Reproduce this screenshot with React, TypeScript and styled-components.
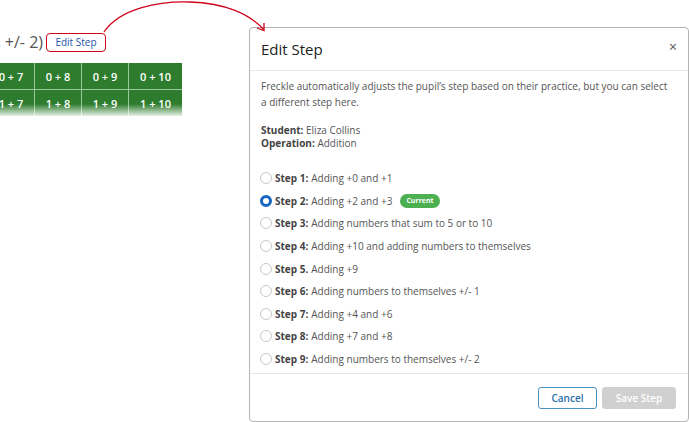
import styled, { createGlobalStyle } from "styled-components";

const GlobalStyle = createGlobalStyle`
  html, body {
    margin: 0;
    padding: 0;
    background: #ffffff;
    font-family: "Open Sans", "Noto Sans", Arial, sans-serif;
  }
`;

const Page = styled.div`
  position: relative;
  width: 689px;
  height: 422px;
  display: flex;
  overflow: hidden;
  background: #fff;
`;

const LeftSide = styled.div`
  width: 249px;
  flex-shrink: 0;
  padding-top: 32px;
  display: flex;
  flex-direction: column;
`;

const StepLine = styled.div`
  display: flex;
  align-items: center;
  height: 20px;
`;

const CroppedLabel = styled.div`
  width: 43px;
  overflow: hidden;
  display: flex;
  justify-content: flex-end;
  white-space: nowrap;
  font-size: 16px;
  color: #555;
  padding-right: 3px;
`;

const EditLink = styled.div`
  width: 58px;
  height: 17px;
  border: 1.5px solid #d0021b;
  border-radius: 4px;
  display: flex;
  align-items: center;
  justify-content: center;
  font-size: 10px;
  color: #2255aa;
`;

const TableCrop = styled.div`
  position: relative;
  margin-top: 11px;
  width: 182px;
  overflow: hidden;
  display: flex;
  justify-content: flex-end;

  &::after {
    content: "";
    position: absolute;
    left: 0;
    right: 0;
    bottom: 0;
    height: 16px;
    background: linear-gradient(to bottom, rgba(255, 255, 255, 0), #ffffff 85%);
  }
`;

const SumGrid = styled.div`
  display: grid;
  grid-template-columns: 46px 46px 46px 53px;
  grid-auto-rows: 26px;
  gap: 1px;
  background: #9cc79c;
  flex-shrink: 0;
  padding-bottom: 4px;
  background-clip: content-box;
`;

const SumCell = styled.div`
  background: #2e7d2e;
  color: #fff;
  font-size: 11px;
  font-weight: 600;
  display: flex;
  align-items: center;
  justify-content: center;
`;

const Modal = styled.div`
  margin-top: 27px;
  width: 438px;
  height: 393px;
  border: 1px solid #b3b3b3;
  border-radius: 4px;
  display: flex;
  flex-direction: column;
  background: #fff;
`;

const ModalHeader = styled.div`
  height: 42px;
  border-bottom: 1px solid #e6e6e6;
  display: flex;
  align-items: center;
  justify-content: space-between;
  padding: 0 11px 0 11px;
  flex-shrink: 0;
`;

const Title = styled.h2`
  margin: 0;
  font-size: 15px;
  font-weight: 400;
  color: #222;
`;

const Close = styled.span`
  font-size: 14px;
  color: #555;
  line-height: 1;
  margin-top: -4px;
`;

const ModalBody = styled.div`
  flex: 1;
  overflow-y: scroll;
  padding: 7px 11px 0 11px;
  font-size: 10px;
  color: #555;

  &::-webkit-scrollbar {
    width: 7px;
  }
  &::-webkit-scrollbar-track {
    background: #f1f1f1;
  }
  &::-webkit-scrollbar-thumb {
    background: #c1c1c1;
    border-radius: 2px;
  }
`;

const Intro = styled.p`
  margin: 0;
  line-height: 16px;
`;

const InfoBlock = styled.div`
  margin-top: 14px;
  line-height: 13px;
`;

const Bold = styled.b`
  font-weight: 700;
  color: #444;
`;

const StepList = styled.div`
  margin-top: 17px;
  display: flex;
  flex-direction: column;
  padding-bottom: 40px;
`;

const StepRow = styled.label`
  display: flex;
  align-items: center;
  height: 22.6px;
`;

const StepText = styled.span`
  margin-left: 3px;
`;

const Radio = styled.span<{ checked: boolean }>`
  width: 12px;
  height: 12px;
  box-sizing: border-box;
  border-radius: 50%;
  margin-left: -1px;
  margin-right: 3px;
  border: ${(p) => (p.checked ? "3.5px solid #1565c0" : "1px solid #c8c8c8")};
  background: #fff;
  flex-shrink: 0;
`;

const Badge = styled.span`
  margin-left: 8px;
  background: #4caf50;
  color: #fff;
  font-size: 7px;
  font-weight: 700;
  border-radius: 7px;
  padding: 0 6px;
  height: 14px;
  display: inline-flex;
  align-items: center;
`;

const ModalFooter = styled.div`
  height: 47px;
  border-top: 1px solid #e6e6e6;
  display: flex;
  align-items: center;
  justify-content: flex-end;
  gap: 5px;
  padding-right: 12px;
  flex-shrink: 0;
`;

const Button = styled.button<{ primary?: boolean }>`
  height: 22px;
  font-family: inherit;
  font-size: 10px;
  font-weight: 600;
  border-radius: 3px;
  padding: 0;
  width: ${(p) => (p.primary ? "74px" : "59px")};
  border: 1px solid ${(p) => (p.primary ? "#d0d0d0" : "#4a90c2")};
  background: ${(p) => (p.primary ? "#d0d0d0" : "#fff")};
  color: ${(p) => (p.primary ? "#fff" : "#2a6fa8")};
`;

const ArrowLayer = styled.svg`
  position: absolute;
  left: 0;
  top: 0;
  pointer-events: none;
`;

const steps = [
  { label: "Step 1:", text: "Adding +0 and +1" },
  { label: "Step 2:", text: "Adding +2 and +3", current: true },
  { label: "Step 3:", text: "Adding numbers that sum to 5 or to 10" },
  { label: "Step 4:", text: "Adding +10 and adding numbers to themselves" },
  { label: "Step 5.", text: "Adding +9" },
  { label: "Step 6:", text: "Adding numbers to themselves +/- 1" },
  { label: "Step 7:", text: "Adding +4 and +6" },
  { label: "Step 8:", text: "Adding +7 and +8" },
  { label: "Step 9:", text: "Adding numbers to themselves +/- 2" },
];

const sums = ["0 + 7", "0 + 8", "0 + 9", "0 + 10", "1 + 7", "1 + 8", "1 + 9", "1 + 10"];

export default function App() {
  return (
    <>
      <GlobalStyle />
      <Page>
        <LeftSide>
          <StepLine>
            <CroppedLabel>themselves +/- 2)</CroppedLabel>
            <EditLink>Edit Step</EditLink>
          </StepLine>
          <TableCrop>
            <SumGrid>
              {sums.map((s) => (
                <SumCell key={s}>{s}</SumCell>
              ))}
            </SumGrid>
          </TableCrop>
        </LeftSide>

        <Modal>
          <ModalHeader>
            <Title>Edit Step</Title>
            <Close>×</Close>
          </ModalHeader>
          <ModalBody>
            <Intro>
              Freckle automatically adjusts the pupil’s step based on their practice, but you can select
              <br />a different step here.
            </Intro>
            <InfoBlock>
              <div>
                <Bold>Student:</Bold> Eliza Collins
              </div>
              <div>
                <Bold>Operation:</Bold> Addition
              </div>
            </InfoBlock>
            <StepList>
              {steps.map((s) => (
                <StepRow key={s.label}>
                  <Radio checked={!!s.current} />
                  <Bold>{s.label}</Bold>
                  <StepText>{s.text}</StepText>
                  {s.current && <Badge>Current</Badge>}
                </StepRow>
              ))}
            </StepList>
          </ModalBody>
          <ModalFooter>
            <Button>Cancel</Button>
            <Button primary>Save Step</Button>
          </ModalFooter>
        </Modal>

        <ArrowLayer width="689" height="60" viewBox="0 0 689 60">
          <path
            d="M104 32 C 120 8, 160 1, 190 2 C 225 3, 250 14, 264 30"
            fill="none"
            stroke="#d0021b"
            strokeWidth="1.3"
          />
          <path d="M257 28 L264 30.5 L264 23" fill="none" stroke="#d0021b" strokeWidth="1.3" />
        </ArrowLayer>
      </Page>
    </>
  );
}
